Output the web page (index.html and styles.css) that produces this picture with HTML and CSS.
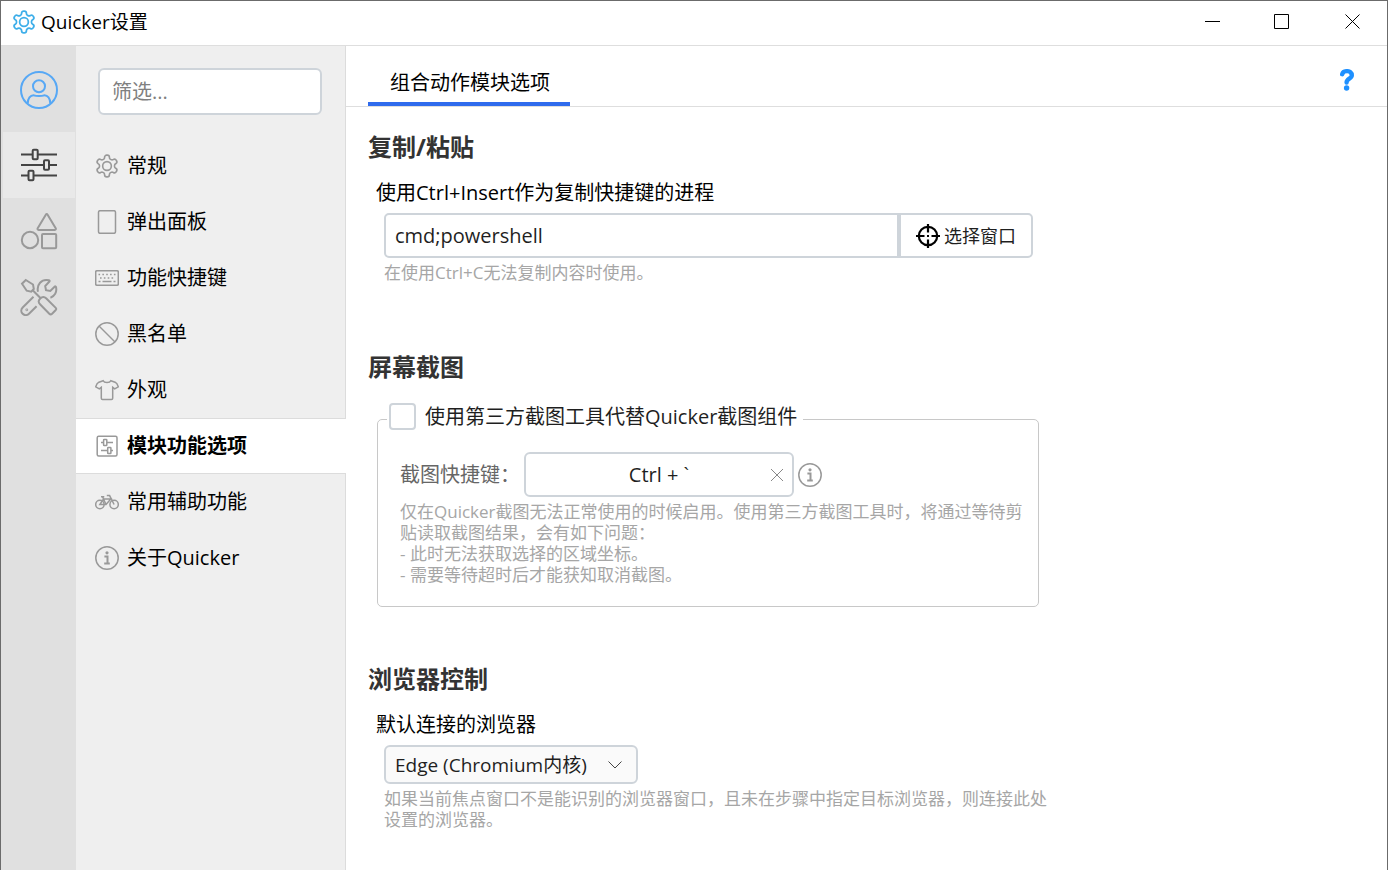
FILE: index.html
```html
<!DOCTYPE html>
<html lang="zh-CN">

<head>
  <meta charset="UTF-8">
  <meta name="viewport" content="width=device-width, initial-scale=1.0">
  <title>Quicker设置</title>
  <link rel="stylesheet" href="styles.css">
</head>

<body>
  <svg class="defs" aria-hidden="true">
    <symbol id="gear" viewBox="1 1 22 22">
      <path d="M12.22 2h-.44a2 2 0 0 0-2 2v.18a2 2 0 0 1-1 1.73l-.43.25a2 2 0 0 1-2 0l-.15-.08a2 2 0 0 0-2.73.73l-.22.38a2 2 0 0 0 .73 2.73l.15.1a2 2 0 0 1 1 1.72v.51a2 2 0 0 1-1 1.74l-.15.09a2 2 0 0 0-.73 2.73l.22.38a2 2 0 0 0 2.73.73l.15-.08a2 2 0 0 1 2 0l.43.25a2 2 0 0 1 1 1.73V20a2 2 0 0 0 2 2h.44a2 2 0 0 0 2-2v-.18a2 2 0 0 1 1-1.73l.43-.25a2 2 0 0 1 2 0l.15.08a2 2 0 0 0 2.73-.73l.22-.39a2 2 0 0 0-.73-2.73l-.15-.08a2 2 0 0 1-1-1.74v-.5a2 2 0 0 1 1-1.74l.15-.09a2 2 0 0 0 .73-2.73l-.22-.38a2 2 0 0 0-2.73-.73l-.15.08a2 2 0 0 1-2 0l-.43-.25a2 2 0 0 1-1-1.73V4a2 2 0 0 0-2-2z"/>
      <circle cx="12" cy="12" r="4"/>
    </symbol>
    <symbol id="info" viewBox="0 0 24 24">
      <circle cx="12" cy="12" r="11.2"/>
      <circle cx="12" cy="6.8" r="1.6" fill="currentColor" stroke="none"/>
      <path d="M9.400 10.500h3.100v7M9.200 17.500h5.600" stroke-width="2"/>
    </symbol>
  </svg>

  <div class="window">
    <header class="titlebar">
      <svg class="icon app-icon"><use href="#gear"/></svg>
      <h1>Quicker设置</h1>
      <div class="window-buttons">
        <button type="button" aria-label="最小化"><svg viewBox="0 0 16 16"><path d="M1 7.500h15"/></svg></button>
        <button type="button" aria-label="最大化"><svg viewBox="0 0 16 16"><path d="M.5.500h14v14H.5z"/></svg></button>
        <button type="button" aria-label="关闭"><svg viewBox="0 0 16 16"><path d="m1.500.500 14 14M15.500.500l-14 14"/></svg></button>
      </div>
    </header>

    <div class="main">
      <nav class="rail">
        <button type="button" class="user" aria-label="账户">
          <svg viewBox="0 0 38 38">
            <circle cx="19" cy="19" r="18"/>
            <circle cx="19" cy="15.3" r="6"/>
            <path d="M7.7 32.6c0-5 2.6-8.6 6.4-8.2 2 .9 7.8.9 9.8 0 3.8-.4 6.4 3.2 6.4 8.2"/>
          </svg>
        </button>
        <button type="button" class="active" aria-label="设置">
          <svg viewBox="0 0 38 38">
            <path d="M1 8.500h11.500M18 8.500h19M1 19h22.500M29.500 19H37M1 29.500h7M14 29.500h23"/>
            <rect x="12.700" y="3.800" width="5" height="9.500" rx="1"/>
            <rect x="24" y="14.200" width="5" height="9.500" rx="1"/>
            <rect x="8.500" y="24.700" width="5" height="9.500" rx="1"/>
          </svg>
        </button>
        <button type="button" aria-label="动作">
          <svg viewBox="0 0 38 38">
            <path d="M25.800 2.700 17.700 16.200c-.5.900-.1 1.700.9 1.700h16.200c1 0 1.400-.8.900-1.700L27.600 2.700c-.5-.8-1.300-.8-1.800 0z"/>
            <circle cx="10" cy="28" r="8.200"/>
            <rect x="22" y="22" width="14.200" height="14.200" rx="1"/>
          </svg>
        </button>
        <button type="button" aria-label="工具">
          <svg viewBox="0 0 38 38">
            <path d="M5.800 2 13 6.500l.8 4.400-2.600 2.800-4.500-1L2 5.700zM12.700 12.300l8 8"/>
            <path d="M20.500 20.300c1.800-1.800 4-1.600 5.600 0l9.400 9.300c1 1 1 1.800 0 2.700l-3.400 3.400c-1 .9-1.900.9-2.800 0L20 26.200c-2-2-1.600-4 .5-5.900z"/>
            <path d="M13.500 18.800 2.700 29.500c-4.200 4.400 2 10.400 6.300 6.200l7.600-7.500"/>
            <path d="M18 13.800c-1.600-7 3.400-13.300 11-11.500.7.200.9.600.4 1.200L25.200 8l.8 4.200 4.300.8 4.300-4.300c.6-.6 1.200-.4 1.400.4 1.200 5-1.500 9.400-5.600 10.600"/>
            <circle cx="6.800" cy="31.800" r=".4"/>
          </svg>
        </button>
      </nav>

      <aside class="sidebar">
        <input class="filter" type="text" placeholder="筛选..." aria-label="筛选">
        <ul class="menu">
          <li><a href="#"><svg class="icon"><use href="#gear"/></svg>常规</a></li>
          <li><a href="#">
            <svg class="icon" viewBox="0 0 24 24"><rect x="3.500" y=".7" width="17" height="22.600" rx="1.500"/></svg>弹出面板</a></li>
          <li><a href="#">
            <svg class="icon" viewBox="0 0 24 24">
              <rect x=".7" y="4.700" width="22.600" height="14.600" rx="1.200"/>
              <path d="M3.500 8.500h17M5 12h14" stroke-width="1.700" stroke-dasharray="1.600 2.250"/>
              <path d="M3.500 15.500h2M7.500 15.500h9M18.500 15.500h2" stroke-width="1.600"/>
            </svg>功能快捷键</a></li>
          <li><a href="#">
            <svg class="icon" viewBox="0 0 24 24"><circle cx="12" cy="12" r="11.200"/><path d="m4 4 16 16"/></svg>黑名单</a></li>
          <li><a href="#">
            <svg class="icon" viewBox="0 0 24 24"><path d="M8.200 2.700c1 2.400 6.600 2.400 7.600 0l4.300 1.500c1.800.9 2.500 2.400 3.200 4.600l-3.600 2.100-2-1.600v11c0 .8-.4 1.200-1.200 1.200h-9c-.8 0-1.200-.4-1.200-1.200v-11l-2 1.600L.7 8.800c.7-2.200 1.400-3.700 3.200-4.600z"/></svg>外观</a></li>
          <li><a href="#" class="active" aria-current="page">
            <svg class="icon" viewBox="0 0 24 24">
              <rect x="2.200" y="2.200" width="19.800" height="19.800" rx="1.500"/>
              <path d="M6 8.500h2.500M12 8.500h6M6 16.500h6M16 16.500h2"/>
              <rect x="8.600" y="5.500" width="3.200" height="6" rx=".6"/>
              <rect x="12.700" y="13.500" width="3.200" height="6" rx=".6"/>
            </svg>模块功能选项</a></li>
          <li><a href="#">
            <svg class="icon" viewBox="0 0 24 24">
              <circle cx="4.900" cy="14.500" r="4.200"/>
              <circle cx="19.100" cy="14.500" r="4.200"/>
              <path d="M4.900 14.500 8.500 9h7.300L11 14.500zM11 14.500 7.500 6.800M6 6.800h3.300M19.100 14.500 14.600 5.600h-2.800"/>
            </svg>常用辅助功能</a></li>
          <li><a href="#"><svg class="icon"><use href="#info"/></svg>关于Quicker</a></li>
        </ul>
      </aside>

      <main class="content">
        <div class="tabs">
          <a href="#" class="tab">组合动作模块选项</a>
          <button type="button" class="help" aria-label="帮助">
            <svg viewBox="0 0 14 22"><path d="M2.200 5.200c1-4 9.600-4.400 9.600 1 0 3.700-5.200 3.300-5.200 7.300"/><circle cx="6.600" cy="19" r="2.700"/></svg>
          </button>
        </div>

        <section>
          <h2>复制/粘贴</h2>
          <div class="field">
            <label for="copy-process">使用Ctrl+Insert作为复制快捷键的进程</label>
            <div class="input-group">
              <input type="text" id="copy-process" value="cmd;powershell">
              <button type="button">
                <svg class="target" viewBox="0 0 24 24"><circle cx="12" cy="12" r="9.200"/><path d="M12 0v8.500M12 15.500V24M0 12h8.500M15.500 12H24M11 12h2"/></svg>选择窗口
              </button>
            </div>
            <p class="hint">在使用Ctrl+C无法复制内容时使用。</p>
          </div>
        </section>

        <section>
          <h2>屏幕截图</h2>
          <fieldset>
            <legend>
              <input type="checkbox" id="third-party">
              <label for="third-party">使用第三方截图工具代替Quicker截图组件</label>
            </legend>
            <div class="hotkey-row">
              <label for="hotkey">截图快捷键：</label>
              <div class="hotkey">
                <input type="text" id="hotkey" value="Ctrl + `">
                <button type="button" aria-label="清除"><svg viewBox="0 0 12 12"><path d="m0 0 12 12M12 0 0 12"/></svg></button>
              </div>
              <svg class="icon"><use href="#info"/></svg>
            </div>
            <p class="hint">仅在Quicker截图无法正常使用的时候启用。使用第三方截图工具时，将通过等待剪贴读取截图结果，会有如下问题：<br>- 此时无法获取选择的区域坐标。<br>- 需要等待超时后才能获知取消截图。</p>
          </fieldset>
        </section>

        <section>
          <h2>浏览器控制</h2>
          <div class="field">
            <label for="browser">默认连接的浏览器</label>
            <div class="select">
              <select id="browser">
                <option>Edge (Chromium内核)</option>
              </select>
              <svg viewBox="0 0 14 8"><path d="m.5.500 6.500 6.500L13.500.500"/></svg>
            </div>
            <p class="hint">如果当前焦点窗口不是能识别的浏览器窗口，且未在步骤中指定目标浏览器，则连接此处设置的浏览器。</p>
          </div>
        </section>
      </main>
    </div>
  </div>
</body>

</html>
```

FILE: styles.css
```css
* {
  box-sizing: border-box;
}

body {
  margin: 0;
  font-family: "Open Sans", "Noto Sans CJK SC", sans-serif;
  font-size: 20px;
  line-height: 26px;
  color: #000;
  background-color: #fff;
}

button,
input,
select {
  font: inherit;
  color: #1f1f1f;
}

button {
  padding: 0;
  border: none;
  background: none;
  cursor: pointer;
}

a {
  color: inherit;
  text-decoration: none;
}

svg {
  flex: none;
  fill: none;
  stroke: currentColor;
}

.defs {
  position: absolute;
  width: 0;
  height: 0;
}

.icon {
  width: 24px;
  height: 24px;
  stroke-width: 1.5;
  color: #999;
}

.window {
  display: flex;
  flex-direction: column;
  min-height: 100vh;
  border: 1px solid #6b6b6b;
  border-bottom: none;
}

/* title bar */
.titlebar {
  display: flex;
  align-items: center;
  height: 45px;
  padding-left: 11px;
  padding-bottom: 2px;
  border-bottom: 1px solid #dedede;
}

.app-icon {
  color: #3daee9;
  stroke-width: 1.6;
}

.titlebar h1 {
  flex: 1;
  margin: 0 0 0 5px;
  font-size: 19px;
  font-weight: normal;
}

.window-buttons {
  display: flex;
}

.window-buttons button {
  display: flex;
  align-items: center;
  justify-content: center;
  width: 70px;
  height: 42px;
  color: #000;
}

.window-buttons svg {
  width: 16px;
  height: 16px;
}

.main {
  display: flex;
  flex: 1;
}

/* left icon rail */
.rail {
  width: 75px;
  padding: 2px 1px 0 2px;
  background-color: #e0e0e0;
}

.rail button {
  display: flex;
  align-items: center;
  justify-content: center;
  width: 100%;
  height: 66px;
  color: #999;
}

.rail .user {
  height: 84px;
  color: #57a8f5;
}

.rail .active {
  color: #444;
  background-color: #e9e9e9;
}

.rail svg {
  width: 38px;
  height: 38px;
  stroke-width: 2;
}

/* menu */
.sidebar {
  width: 270px;
  padding-top: 22px;
  background-color: #efefef;
  box-shadow: inset -1px 0 #dcdcdc;
}

.filter {
  display: block;
  width: 224px;
  height: 47px;
  margin: 0 22px 23px;
  padding: 0 12px;
  border: 2px solid #ced4da;
  border-radius: 6px;
  background-color: #fff;
}

.filter::placeholder {
  color: #808080;
}

.menu {
  margin: 0;
  padding: 0;
  list-style: none;
}

.menu a {
  display: flex;
  align-items: center;
  gap: 8px;
  height: 56px;
  padding-left: 19px;
  border: solid transparent;
  border-width: 1px 0;
}

.menu .active {
  font-weight: bold;
  background-color: #fff;
  border-color: #dcdcdc;
}

/* settings page */
.content {
  flex: 1;
  min-width: 0;
}

.tabs {
  display: flex;
  justify-content: space-between;
  height: 61px;
  margin-bottom: 24px;
  padding: 0 33px 0 22px;
  border-bottom: 1px solid #dedede;
}

.tab {
  padding: 24px 20px 0 22px;
  border-bottom: 4px solid #2f6bed;
}

.help svg {
  display: block;
  width: 14px;
  height: 22px;
  margin-top: 7px;
  stroke: #1e90ff;
  stroke-width: 4.4;
  stroke-linecap: round;
}

.help circle {
  fill: #1e90ff;
  stroke: none;
}

section {
  max-width: 715px;
  margin-bottom: 56px;
  padding: 0 12px 0 22px;
}

h2 {
  margin: 0 0 17px;
  font-size: 24px;
  line-height: 32px;
  color: #333;
}

.field {
  padding: 0 0 12px 16px;
}

.field label {
  display: block;
  margin: 0 0 7px -8px;
}

.hint {
  margin: 4px 0 0;
  font-size: 17px;
  line-height: 21px;
  color: #a6a6a6;
}

.input-group {
  display: flex;
  height: 45px;
  margin-right: 16px;
}

.input-group input {
  flex: 1;
  min-width: 0;
  padding: 0 9px;
  border: 2px solid #ced4da;
  border-radius: 5px 0 0 5px;
}

.input-group button {
  display: flex;
  align-items: center;
  justify-content: center;
  gap: 4px;
  width: 134px;
  font-size: 18px;
  border: 2px solid #ced4da;
  border-radius: 0 5px 5px 0;
}

.target {
  width: 24px;
  height: 24px;
  color: #000;
  stroke-width: 2.2;
}

fieldset {
  min-width: 0;
  margin: 20px 10px 0 9px;
  padding: 0 8px 21px 9px;
  border: 1px solid #c8c8c8;
  border-radius: 5px;
}

legend {
  display: flex;
  align-items: center;
  gap: 9px;
  padding: 0 6px 6px 2px;
  color: #1f1f1f;
}

legend input {
  appearance: none;
  width: 27px;
  height: 27px;
  margin: 0;
  border: 2px solid #ced4da;
  border-radius: 4px;
}

legend input:checked {
  background-color: #2f6bed;
}

.hotkey-row {
  display: flex;
  align-items: center;
  margin: 16px 0 0 13px;
  color: #666;
}

.hotkey-row label {
  width: 124px;
}

.hotkey {
  position: relative;
  width: 270px;
  margin-right: 4px;
}

.hotkey input {
  display: block;
  width: 100%;
  height: 45px;
  padding: 0 30px;
  text-align: center;
  border: 2px solid #ced4da;
  border-radius: 6px;
}

.hotkey button {
  position: absolute;
  top: 0;
  right: 11px;
  display: flex;
  align-items: center;
  height: 45px;
  color: #888;
}

.hotkey button svg {
  width: 12px;
  height: 12px;
}

fieldset .hint {
  margin-left: 13px;
}

.select {
  position: relative;
  width: 254px;
}

.select select {
  display: block;
  appearance: none;
  width: 100%;
  height: 39px;
  padding: 0 9px;
  font-size: 19px;
  border: 2px solid #ced4da;
  border-radius: 6px;
  background-color: #fafafa;
}

.select svg {
  position: absolute;
  top: 16px;
  right: 16px;
  width: 14px;
  height: 8px;
  color: #444;
  pointer-events: none;
}
```
